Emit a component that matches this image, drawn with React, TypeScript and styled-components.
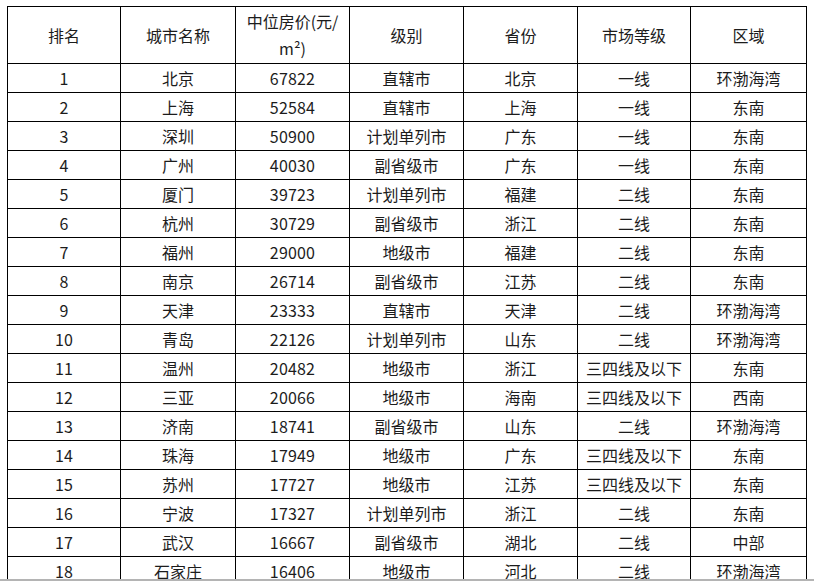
import * as React from "react"
import styled, { createGlobalStyle } from "styled-components"

const GlobalStyle = createGlobalStyle`
    html, body {
        margin: 0;
        padding: 0;
        background: #ffffff;
        overflow: hidden;
    }
`

interface CityRow {
    rank: number
    city: string
    price: number
    level: string
    province: string
    tier: string
    region: string
}

const ROWS: Array<CityRow> = [
    { rank: 1, city: "北京", price: 67822, level: "直辖市", province: "北京", tier: "一线", region: "环渤海湾" },
    { rank: 2, city: "上海", price: 52584, level: "直辖市", province: "上海", tier: "一线", region: "东南" },
    { rank: 3, city: "深圳", price: 50900, level: "计划单列市", province: "广东", tier: "一线", region: "东南" },
    { rank: 4, city: "广州", price: 40030, level: "副省级市", province: "广东", tier: "一线", region: "东南" },
    { rank: 5, city: "厦门", price: 39723, level: "计划单列市", province: "福建", tier: "二线", region: "东南" },
    { rank: 6, city: "杭州", price: 30729, level: "副省级市", province: "浙江", tier: "二线", region: "东南" },
    { rank: 7, city: "福州", price: 29000, level: "地级市", province: "福建", tier: "二线", region: "东南" },
    { rank: 8, city: "南京", price: 26714, level: "副省级市", province: "江苏", tier: "二线", region: "东南" },
    { rank: 9, city: "天津", price: 23333, level: "直辖市", province: "天津", tier: "二线", region: "环渤海湾" },
    { rank: 10, city: "青岛", price: 22126, level: "计划单列市", province: "山东", tier: "二线", region: "环渤海湾" },
    { rank: 11, city: "温州", price: 20482, level: "地级市", province: "浙江", tier: "三四线及以下", region: "东南" },
    { rank: 12, city: "三亚", price: 20066, level: "地级市", province: "海南", tier: "三四线及以下", region: "西南" },
    { rank: 13, city: "济南", price: 18741, level: "副省级市", province: "山东", tier: "二线", region: "环渤海湾" },
    { rank: 14, city: "珠海", price: 17949, level: "地级市", province: "广东", tier: "三四线及以下", region: "东南" },
    { rank: 15, city: "苏州", price: 17727, level: "地级市", province: "江苏", tier: "三四线及以下", region: "东南" },
    { rank: 16, city: "宁波", price: 17327, level: "计划单列市", province: "浙江", tier: "二线", region: "东南" },
    { rank: 17, city: "武汉", price: 16667, level: "副省级市", province: "湖北", tier: "二线", region: "中部" },
    { rank: 18, city: "石家庄", price: 16406, level: "地级市", province: "河北", tier: "二线", region: "环渤海湾" },
]

const COLUMN_WIDTHS = [113, 115, 114, 114, 114, 113, 116]

const Page = styled.div`
    display: flex;
    flex-direction: column;
    height: 581px;
    width: 814px;
`

const TableArea = styled.div`
    flex: 1;
    overflow: hidden;
    padding: 6px 0 0 7px;
`

const BottomStrip = styled.div`
    height: 2px;
    background: #b4b4b4;
`

const Table = styled.table`
    border-collapse: collapse;
    table-layout: fixed;
    width: 799px;
    font-family: "Noto Sans CJK SC", "Liberation Sans", sans-serif;
    font-size: 16px;
    color: #1c1c1c;
`

const HeadCell = styled.th`
    border: 1px solid #000000;
    height: 56px;
    padding: 0 2px;
    font-weight: normal;
    line-height: 27px;
    text-align: center;
    vertical-align: middle;
`

const Cell = styled.td<{ $numeric?: boolean }>`
    border: 1px solid #000000;
    height: 28px;
    padding: 0 2px;
    line-height: 28px;
    text-align: center;
    vertical-align: middle;
    white-space: nowrap;
    letter-spacing: ${(props) => (props.$numeric ? "0.2px" : "0")};
`

class App extends React.Component {
    public render() {
        return (
            <Page>
                <GlobalStyle />
                <TableArea>
                    <Table>
                        <colgroup>
                            {COLUMN_WIDTHS.map((w, i) => (
                                <col key={i} style={{ width: w }} />
                            ))}
                        </colgroup>
                        <thead>
                            <tr>
                                <HeadCell>排名</HeadCell>
                                <HeadCell>城市名称</HeadCell>
                                <HeadCell>
                                    中位房价(元/
                                    <br />
                                    m²)
                                </HeadCell>
                                <HeadCell>级别</HeadCell>
                                <HeadCell>省份</HeadCell>
                                <HeadCell>市场等级</HeadCell>
                                <HeadCell>区域</HeadCell>
                            </tr>
                        </thead>
                        <tbody>
                            {ROWS.map((row) => (
                                <tr key={row.rank}>
                                    <Cell $numeric>{row.rank}</Cell>
                                    <Cell>{row.city}</Cell>
                                    <Cell $numeric>{row.price}</Cell>
                                    <Cell>{row.level}</Cell>
                                    <Cell>{row.province}</Cell>
                                    <Cell>{row.tier}</Cell>
                                    <Cell>{row.region}</Cell>
                                </tr>
                            ))}
                        </tbody>
                    </Table>
                </TableArea>
                <BottomStrip />
            </Page>
        )
    }
}

export default App
